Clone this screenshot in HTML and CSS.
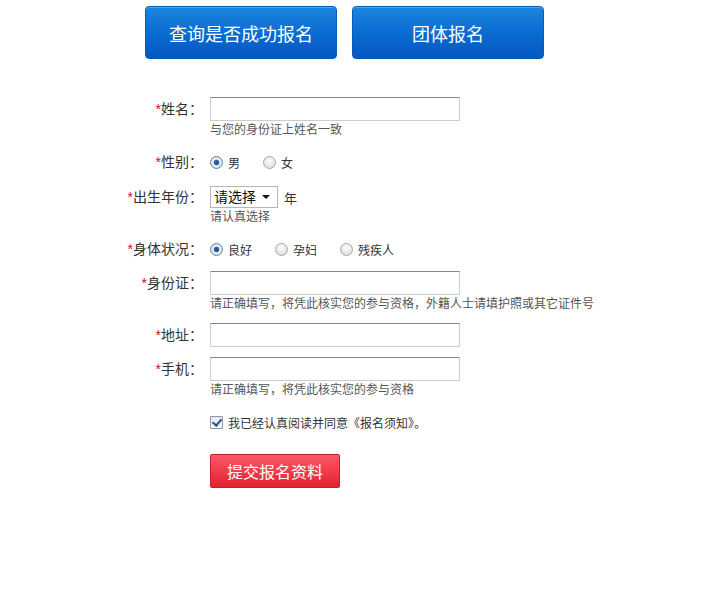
FILE: index.html
```html
<!DOCTYPE html>
<html lang="zh-CN">
<head>
    <meta charset="UTF-8">
    <title>报名</title>
    <link rel="stylesheet" href="styles.css">
</head>
<body>
    <div class="top-btns">
        <a class="big-btn" href="#">查询是否成功报名</a>
        <a class="big-btn" href="#">团体报名</a>
    </div>

    <form class="reg-form">
        <div class="row r-name">
            <label class="lbl"><i>*</i>姓名：</label>
            <div class="field">
                <input class="txt" type="text">
                <p class="tip">与您的身份证上姓名一致</p>
            </div>
        </div>

        <div class="row r-sex">
            <label class="lbl"><i>*</i>性别：</label>
            <div class="field opts">
                <label class="opt"><input type="radio" name="sex" checked>男</label>
                <label class="opt"><input type="radio" name="sex">女</label>
            </div>
        </div>

        <div class="row r-year">
            <label class="lbl"><i>*</i>出生年份：</label>
            <div class="field">
                <div class="sel-line">
                    <span class="sel"><select><option>请选择</option></select></span>
                    <span class="unit">年</span>
                </div>
                <p class="tip">请认真选择</p>
            </div>
        </div>

        <div class="row r-body">
            <label class="lbl"><i>*</i>身体状况：</label>
            <div class="field opts">
                <label class="opt"><input type="radio" name="body" checked>良好</label>
                <label class="opt"><input type="radio" name="body">孕妇</label>
                <label class="opt"><input type="radio" name="body">残疾人</label>
            </div>
        </div>

        <div class="row r-id">
            <label class="lbl"><i>*</i>身份证：</label>
            <div class="field">
                <input class="txt" type="text">
                <p class="tip">请正确填写，将凭此核实您的参与资格，外籍人士请填护照或其它证件号</p>
            </div>
        </div>

        <div class="row r-addr">
            <label class="lbl"><i>*</i>地址：</label>
            <div class="field">
                <input class="txt" type="text">
            </div>
        </div>

        <div class="row r-tel">
            <label class="lbl"><i>*</i>手机：</label>
            <div class="field">
                <input class="txt" type="text">
                <p class="tip">请正确填写，将凭此核实您的参与资格</p>
            </div>
        </div>

        <div class="row r-agree">
            <span class="lbl"></span>
            <div class="field">
                <label class="opt chk"><input type="checkbox" checked>我已经认真阅读并同意《报名须知》。</label>
            </div>
        </div>

        <div class="row r-submit">
            <span class="lbl"></span>
            <div class="field">
                <button class="submit" type="button">提交报名资料</button>
            </div>
        </div>
    </form>
</body>
</html>
```

FILE: styles.css
```css
body {
    margin: 0;
    background: #fff;
    color: #333;
    font-family: "Liberation Sans", "Noto Sans CJK SC", sans-serif;
    font-size: 13px;
}

.top-btns {
    display: flex;
    gap: 15px;
    padding: 6px 0 0 145px;
}

.big-btn {
    width: 192px;
    height: 53px;
    box-sizing: border-box;
    display: flex;
    align-items: center;
    justify-content: center;
    border-radius: 4px;
    border: 1px solid #0a5bb8;
    background: linear-gradient(#1a86de, #0a6ad0 55%, #0557c2);
    color: #fff;
    font-size: 18px;
    text-decoration: none;
    box-shadow: inset 0 1px 0 rgba(255,255,255,0.25);
}

.reg-form {
    padding-top: 38px;
}

.row {
    display: flex;
    align-items: flex-start;
}

.lbl {
    width: 203px;
    flex: none;
    text-align: right;
    padding-right: 7px;
    line-height: 24px;
    color: #333;
    font-size: 14px;
}

.lbl i {
    font-style: normal;
    color: #c8102e;
}

.field {
    flex: none;
}

.txt {
    display: block;
    width: 250px;
    height: 24px;
    box-sizing: border-box;
    margin: 0;
    border: 1px solid #ccc;
    border-top-color: #888;
    background: #fff;
    padding: 0 4px;
    font: inherit;
}

.tip {
    margin: 0;
    line-height: 18px;
    font-size: 12px;
    color: #555;
}

.opts {
    display: flex;
    height: 20px;
    align-items: center;
}

.r-sex .lbl,
.r-body .lbl,
.r-agree .lbl {
    line-height: 20px;
}

.opt {
    display: flex;
    align-items: center;
    gap: 5px;
    margin-right: 23px;
    font-size: 12px;
    color: #333;
}

.opt input {
    appearance: none;
    -webkit-appearance: none;
    width: 13px;
    height: 13px;
    margin: 0;
    flex: none;
    border: 1px solid #a8a8a8;
    border-radius: 50%;
    background: radial-gradient(circle at 50% 35%, #fdfdfd, #d6d6d6);
    box-sizing: border-box;
}

.opt input:checked {
    background: radial-gradient(circle, #1b4f8a 0, #2c6fb5 2.5px, #e9eef4 3.2px, #c9d3de 100%);
    border-color: #6a7f96;
}

.chk {
    height: 20px;
}

.chk input[type="checkbox"] {
    border-radius: 1px;
    border-color: #8c97a6;
    background: linear-gradient(#e4e9f2, #fafbfd);
    position: relative;
}

.chk input[type="checkbox"]:checked::after {
    content: "";
    position: absolute;
    left: 3px;
    top: 0px;
    width: 4px;
    height: 7px;
    border: solid #2a4f8a;
    border-width: 0 2px 2px 0;
    transform: rotate(40deg);
}

.sel-line {
    display: flex;
    align-items: center;
    height: 22px;
}

.sel {
    position: relative;
    display: inline-block;
    width: 68px;
    height: 22px;
}

.sel select {
    appearance: none;
    -webkit-appearance: none;
    width: 100%;
    height: 100%;
    margin: 0;
    border: 1px solid #b5b5b5;
    border-radius: 0;
    background: #fff;
    padding: 0 0 0 3px;
    font-family: inherit;
    font-size: 14px;
    color: #111;
}

.sel::after {
    content: "";
    position: absolute;
    right: 8px;
    top: 9px;
    border-left: 4px solid transparent;
    border-right: 4px solid transparent;
    border-top: 4px solid #111;
    pointer-events: none;
}

.unit {
    margin-left: 6px;
    font-size: 13px;
}

.r-year .lbl {
    line-height: 22px;
}

.r-sex { margin-top: 13px; }
.r-year { margin-top: 14px; }
.r-body { margin-top: 13px; }
.r-id { margin-top: 12px; }
.r-addr { margin-top: 10px; }
.r-tel { margin-top: 10px; }
.r-agree { margin-top: 13px; }
.r-submit { margin-top: 22px; }

.submit {
    width: 130px;
    height: 34px;
    margin: 0;
    border: 1px solid #c41c2c;
    border-radius: 2px;
    background: linear-gradient(#fb5868, #ee3646 60%, #df2333);
    color: #fff;
    font-family: inherit;
    font-size: 16px;
    cursor: pointer;
}
```
